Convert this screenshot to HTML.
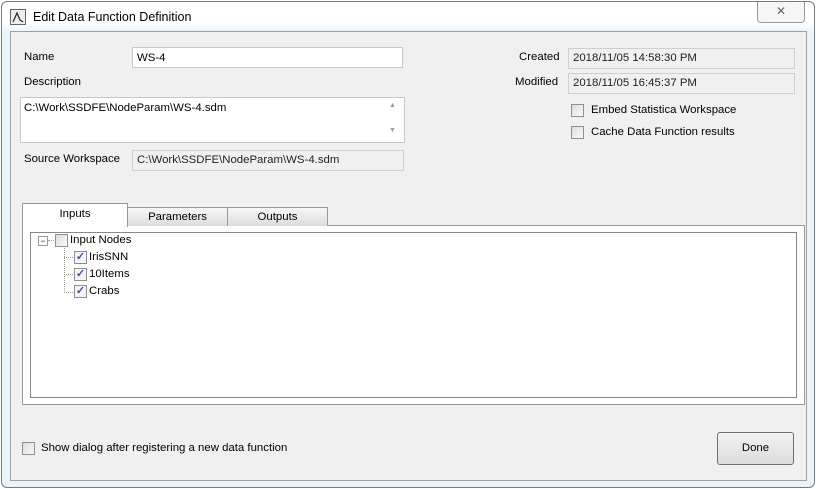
<!DOCTYPE html>
<html><head><style>
body{margin:0;width:816px;height:489px;background:#fff;font-family:"Liberation Sans",sans-serif;font-size:11.4px;color:#000;position:relative;overflow:hidden}
.a{position:absolute}
.win{left:1px;top:1px;width:812px;height:485px;border:1px solid #7a7a7a;border-radius:6px;background:linear-gradient(#fff,#fff 20px,#eaf4fb 30px)}
.client{left:10px;top:31px;width:795px;height:448px;background:#f0f0f0;border:1px solid #a0a0a0}
.box{background:#fff;border:1px solid #c8c8c8}
.ro{background:#f0f0f0;border:1px solid #cfcfcf;color:#222}
.cb{width:11px;height:11px;border:1px solid #8f8f8f;background:linear-gradient(135deg,#dcdcdc,#fafafa)}
.tab{height:18px;border:1px solid #999;border-bottom:none;background:linear-gradient(#f7f7f7,#dcdcdc);text-align:center;line-height:18px}
.ck{width:11px;height:11px;border:1px solid #8f8f8f;background:#f4f4f4;color:#3355aa;font-size:11px;line-height:11px;text-align:center;font-weight:bold}
</style></head><body>
<div class="a win"></div>
<div class="a" style="left:10px;top:9px;width:14px;height:14px;border:1px solid #666;background:#eee"><svg width="14" height="14"><path d="M2 12 L6 3 L9 10 L12 12" stroke="#222" fill="none" stroke-width="1.2"/></svg></div>
<div class="a" style="left:33px;top:10px;font-size:12.5px">Edit Data Function Definition</div>
<div class="a" style="left:757px;top:2px;width:46px;height:20px;border:1px solid #999;border-top:none;border-radius:0 0 4px 4px;background:#f6f6f6;text-align:center;line-height:18px;color:#666;font-size:12px">✕</div>
<div class="a client"></div>
<div class="a" style="left:24px;top:51px">Name</div>
<div class="a box" style="left:132px;top:47px;width:271px;height:21px;line-height:20px;padding-left:4px;box-sizing:border-box">WS-4</div>
<div class="a" style="left:24px;top:76px">Description</div>
<div class="a box" style="left:20px;top:97px;width:385px;height:46px;box-sizing:border-box;padding:4px 3px">C:\Work\SSDFE\NodeParam\WS-4.sdm</div>
<div class="a" style="left:389px;top:102px;font-size:7px;color:#999">▲</div>
<div class="a" style="left:389px;top:127px;font-size:7px;color:#999">▼</div>
<div class="a" style="left:24px;top:153px">Source Workspace</div>
<div class="a ro" style="left:132px;top:150px;width:272px;height:21px;box-sizing:border-box;padding:3px 4px">C:\Work\SSDFE\NodeParam\WS-4.sdm</div>
<div class="a" style="left:519px;top:51px">Created</div>
<div class="a ro" style="left:568px;top:48px;width:227px;height:21px;box-sizing:border-box;padding:3px 4px">2018/11/05 14:58:30 PM</div>
<div class="a" style="left:515px;top:76px">Modified</div>
<div class="a ro" style="left:568px;top:73px;width:227px;height:21px;box-sizing:border-box;padding:3px 4px">2018/11/05 16:45:37 PM</div>
<div class="a cb" style="left:571px;top:104px"></div>
<div class="a" style="left:591px;top:104px">Embed Statistica Workspace</div>
<div class="a cb" style="left:571px;top:126px"></div>
<div class="a" style="left:591px;top:126px">Cache Data Function results</div>
<div class="a" style="left:22px;top:225px;width:783px;height:180px;border:1px solid #999;background:#fff;box-sizing:border-box"></div>
<div class="a tab" style="left:127px;top:207px;width:99px">Parameters</div>
<div class="a tab" style="left:227px;top:207px;width:99px">Outputs</div>
<div class="a" style="left:22px;top:203px;width:104px;height:23px;border:1px solid #999;border-bottom:none;background:#fff;text-align:center;line-height:20px">Inputs</div>
<div class="a" style="left:30px;top:232px;width:767px;height:166px;border:1px solid #828790;box-sizing:border-box;background:#fff"></div>
<div class="a" style="left:38px;top:236px;width:8px;height:8px;border:1px solid #999;font-size:9px;line-height:8px;text-align:center;color:#333">−</div>
<div class="a" style="left:48px;top:240px;width:6px;border-top:1px dotted #999"></div>
<div class="a" style="left:64px;top:246px;height:47px;border-left:1px dotted #999"></div>
<div class="a" style="left:64px;top:257px;width:9px;border-top:1px dotted #999"></div>
<div class="a" style="left:64px;top:274px;width:9px;border-top:1px dotted #999"></div>
<div class="a" style="left:64px;top:292px;width:9px;border-top:1px dotted #999"></div>
<div class="a cb" style="left:55px;top:234px"></div>
<div class="a" style="left:70px;top:234px">Input Nodes</div>
<div class="a ck" style="left:74px;top:251px">✓</div><div class="a" style="left:89px;top:251px">IrisSNN</div>
<div class="a ck" style="left:74px;top:268px">✓</div><div class="a" style="left:89px;top:268px">10Items</div>
<div class="a ck" style="left:74px;top:285px">✓</div><div class="a" style="left:89px;top:285px">Crabs</div>
<div class="a cb" style="left:22px;top:442px"></div>
<div class="a" style="left:41px;top:442px">Show dialog after registering a new data function</div>
<div class="a" style="left:717px;top:432px;width:77px;height:33px;border:1px solid #707070;border-radius:3px;background:linear-gradient(#f2f2f2,#dcdcdc);box-sizing:border-box;text-align:center;line-height:31px">Done</div>
</body></html>
